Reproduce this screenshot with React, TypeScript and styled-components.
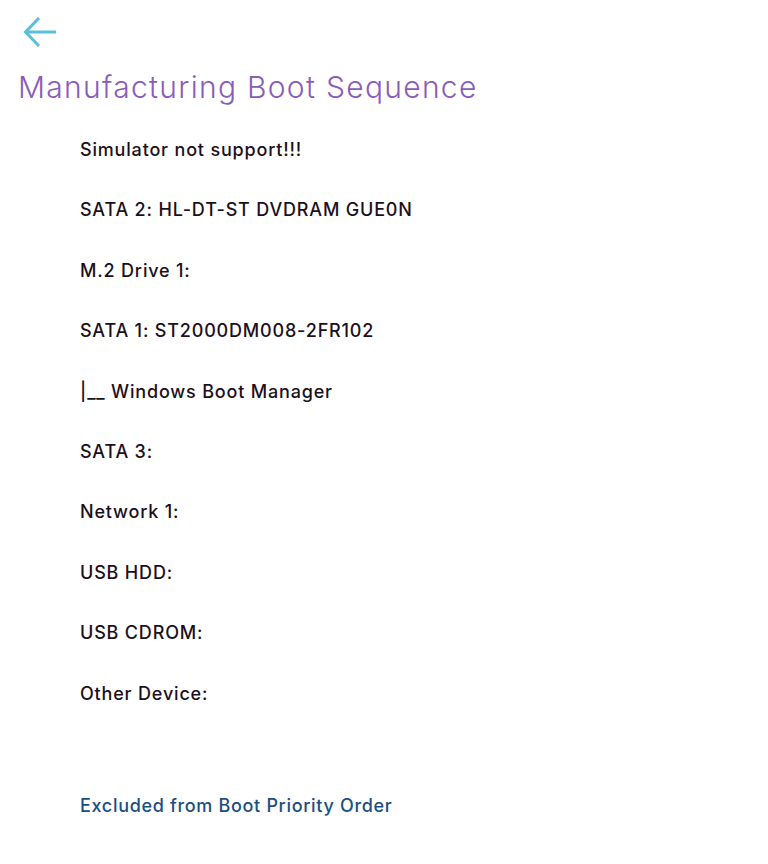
import React from "react";
import styled, { createGlobalStyle } from "styled-components";

const Global = createGlobalStyle`
  html, body { margin: 0; padding: 0; background: #ffffff; }
  body { font-family: Inter, "Liberation Sans", sans-serif; }
`;

const Page = styled.div`
  padding: 14px 0 0 18px;
  display: flex;
  flex-direction: column;
`;

const BackButton = styled.button`
  width: 40px;
  height: 36px;
  padding: 0;
  margin-left: 2px;
  border: none;
  background: transparent;
  display: flex;
  align-items: center;
  justify-content: center;
  cursor: pointer;
`;

const Title = styled.h1`
  margin: 17px 0 0 0;
  font-family: Inter, "Liberation Sans", sans-serif;
  font-weight: 300;
  font-size: 30px;
  letter-spacing: 1.3px;
  line-height: 40px;
  color: #8a5cba;
`;

const List = styled.div`
  display: flex;
  flex-direction: column;
  padding-left: 62px;
  margin-top: 31px;
`;

const Item = styled.div<{ $link?: boolean }>`
  font-family: Inter, "Liberation Sans", sans-serif;
  font-weight: 500;
  font-size: 18px;
  letter-spacing: ${(p) => (p.$link ? "0.68px" : "0.82px")};
  line-height: 24px;
  height: 60.4px;
  color: ${(p) => (p.$link ? "#1b4e82" : "#1c0f1c")};
`;

const Spacer = styled.div`
  height: 52px;
`;

const items = [
  "Simulator not support!!!",
  "SATA 2: HL-DT-ST DVDRAM GUE0N",
  "M.2 Drive 1:",
  "SATA 1: ST2000DM008-2FR102",
  "|__ Windows Boot Manager",
  "SATA 3:",
  "Network 1:",
  "USB HDD:",
  "USB CDROM:",
  "Other Device:",
];

export default function App() {
  return (
    <>
      <Global />
      <Page>
        <BackButton aria-label="Back">
          <svg width="36" height="34" viewBox="0 0 36 34" fill="none">
            <path d="M34 17H4M17 3L3.5 17L17 31" stroke="#5bbfdc" strokeWidth="3" strokeLinecap="butt" />
          </svg>
        </BackButton>
        <Title>Manufacturing Boot Sequence</Title>
        <List>
          {items.map((t) => (
            <Item key={t}>{t}</Item>
          ))}
          <Spacer />
          <Item $link>Excluded from Boot Priority Order</Item>
        </List>
      </Page>
    </>
  );
}
